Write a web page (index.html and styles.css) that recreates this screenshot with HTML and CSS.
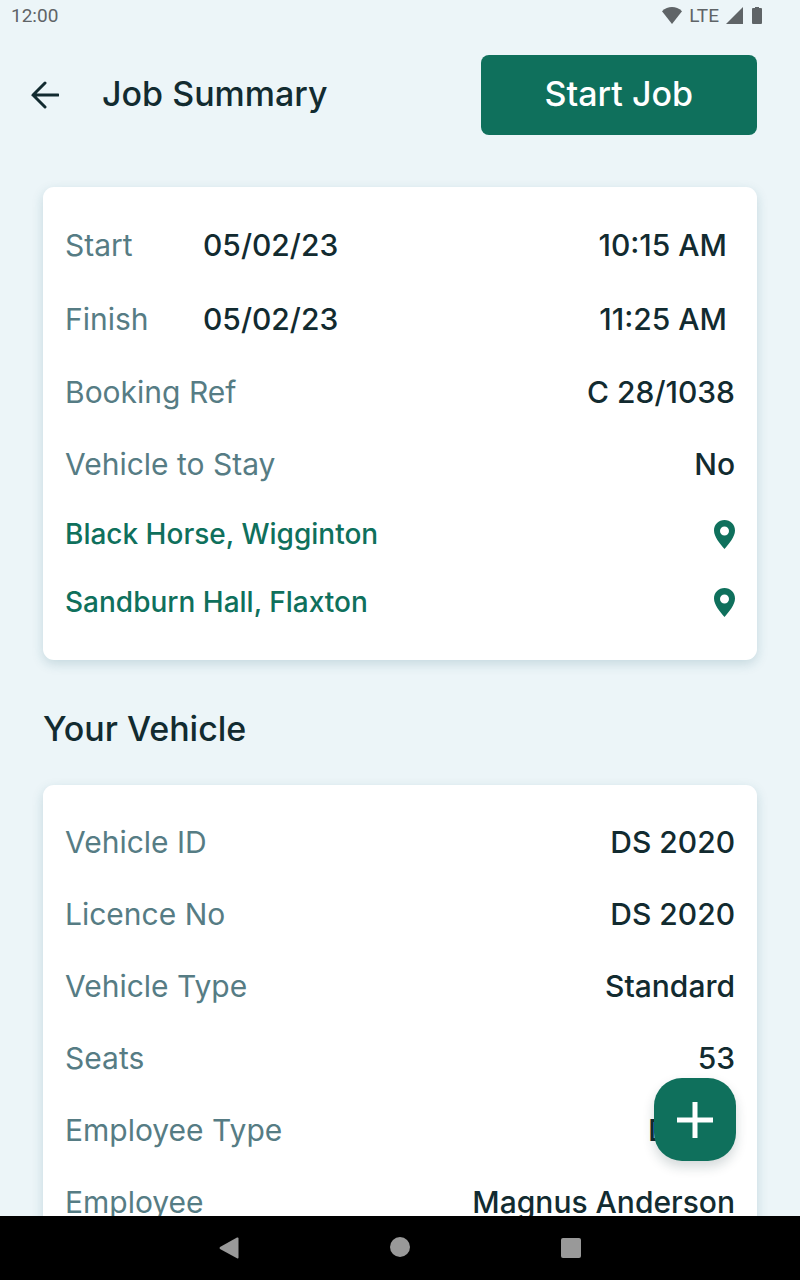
FILE: index.html
```html
<!DOCTYPE html>
<html lang="en">
<head>
  <meta charset="UTF-8" />
  <meta name="viewport" content="width=device-width, initial-scale=1.0"/>
  <title>Job Summary</title>
  <link rel="stylesheet" href="styles.css">
</head>
<body>
  <div class="status-bar">
    <span class="clock">12:00</span>
    <div class="status-icons">
      <svg width="20" height="17" viewBox="0 0 20 17"><path d="M0 4.2C6 -1.4 14 -1.4 20 4.2L10 17Z"/></svg>
      <span>LTE</span>
      <svg class="signal" width="17" height="17" viewBox="0 0 17 17"><path d="M17 0V17H0Z"/></svg>
      <svg class="battery" width="10" height="17" viewBox="0 0 10 17"><path d="M3 0H7V1H9Q10 1 10 2V16Q10 17 9 17H1Q0 17 0 16V2Q0 1 1 1H3Z"/></svg>
    </div>
  </div>

  <main class="content">
    <header class="header">
      <button class="back" aria-label="Back">
        <svg width="28" height="28" viewBox="0 0 28 28"><path d="M14 2L2 14L14 26M2 14H27"/></svg>
      </button>
      <h1>Job Summary</h1>
      <button class="start-btn">Start Job</button>
    </header>

    <section class="card">
      <div class="row time-row">
        <span class="label">Start</span>
        <span class="date">05/02/23</span>
        <span class="time">10:15 AM</span>
      </div>
      <div class="row time-row">
        <span class="label">Finish</span>
        <span class="date">05/02/23</span>
        <span class="time">11:25 AM</span>
      </div>
      <div class="row"><span class="label">Booking Ref</span><span>C 28/1038</span></div>
      <div class="row"><span class="label">Vehicle to Stay</span><span>No</span></div>
      <a class="row place" href="#">
        <span>Black Horse, Wigginton</span>
        <svg width="21" height="29" viewBox="0 0 21 29"><path fill-rule="evenodd" d="M10.500 0C4.700 0 0 4.600 0 10.500C0 17 6 23.500 10.500 29C15 23.500 21 17 21 10.500C21 4.600 16.300 0 10.500 0ZM10.500 6.500A4.500 4.500 0 1 1 10.500 15.500A4.500 4.500 0 1 1 10.500 6.500Z"/></svg>
      </a>
      <a class="row place" href="#">
        <span>Sandburn Hall, Flaxton</span>
        <svg width="21" height="29" viewBox="0 0 21 29"><path fill-rule="evenodd" d="M10.500 0C4.700 0 0 4.600 0 10.500C0 17 6 23.500 10.500 29C15 23.500 21 17 21 10.500C21 4.600 16.300 0 10.500 0ZM10.500 6.500A4.500 4.500 0 1 1 10.500 15.500A4.500 4.500 0 1 1 10.500 6.500Z"/></svg>
      </a>
    </section>

    <h2>Your Vehicle</h2>

    <section class="card">
      <div class="row"><span class="label">Vehicle ID</span><span>DS 2020</span></div>
      <div class="row"><span class="label">Licence No</span><span>DS 2020</span></div>
      <div class="row"><span class="label">Vehicle Type</span><span>Standard</span></div>
      <div class="row"><span class="label">Seats</span><span>53</span></div>
      <div class="row"><span class="label">Employee Type</span><span>Driver</span></div>
      <div class="row"><span class="label">Employee</span><span>Magnus Anderson</span></div>
    </section>
  </main>

  <button class="fab" aria-label="Add">
    <svg width="36" height="36" viewBox="0 0 36 36"><path d="M18 0V36M0 18H36"/></svg>
  </button>

  <nav class="nav-bar">
    <button aria-label="Back"><svg width="20" height="22" viewBox="0 0 20 22"><path d="M18 0.500Q19.500 0 19.500 1.500V20.500Q19.500 22 18 21.300L1 12Q0 11 1 10Z"/></svg></button>
    <button aria-label="Home"><svg width="20" height="22" viewBox="0 0 20 22"><circle cx="10" cy="10" r="10"/></svg></button>
    <button aria-label="Recent apps"><svg width="20" height="22" viewBox="0 0 20 22"><rect y="1" width="20" height="20" rx="2"/></svg></button>
  </nav>
</body>
</html>
```
FILE: styles.css
```css
* {
  box-sizing: border-box;
}

body {
  display: flex;
  flex-direction: column;
  position: relative;
  height: 100vh;
  margin: 0;
  overflow: hidden;
  background: #ecf5f8;
  color: #122b30;
  font-family: Inter, sans-serif;
}

button {
  padding: 0;
  border: none;
  background: none;
  font-family: inherit;
  cursor: pointer;
}

svg {
  display: block;
}

.status-bar {
  display: flex;
  flex: none;
  justify-content: space-between;
  align-items: center;
  height: 32px;
  padding: 0 38px 2px 11px;
  color: #5f6467;
  font-family: Roboto, sans-serif;
  font-size: 19px;
}

.status-icons {
  display: flex;
  align-items: center;
  gap: 7px;
  fill: #5f6467;
}

.battery {
  margin-left: 2px;
}

.content {
  flex: 1;
  min-height: 0;
  padding: 23px 43px 0;
  overflow-y: auto;
  scrollbar-width: none;
}

.header {
  display: flex;
  align-items: center;
  height: 80px;
  margin-bottom: 52px;
}

.back {
  margin: 0 43px 0 -12px;
}

.back svg {
  fill: none;
  stroke: #122b30;
  stroke-width: 3;
  stroke-linecap: round;
}

h1,
h2 {
  margin: 0;
  font-size: 34px;
  font-weight: 500;
  line-height: 40px;
}

h1 {
  padding-bottom: 3px;
}

h2 {
  margin: 49px 0 36px;
}

.start-btn {
  height: 80px;
  margin-left: auto;
  padding: 0 64px 3px;
  border-radius: 8px;
  background: #0f705c;
  color: #fff;
  font-size: 34px;
  font-weight: 500;
}

.card {
  padding: 21px 22px 24px;
  border-radius: 11px;
  background: #fff;
  box-shadow: 0 4px 12px rgba(20, 90, 110, 0.18);
}

.row {
  display: flex;
  justify-content: space-between;
  align-items: center;
  height: 72px;
  font-size: 30px;
  font-weight: 500;
}

.label {
  color: #567c84;
  font-weight: 400;
}

.time-row {
  height: 74px;
  padding-right: 8px;
}

.time-row .label {
  width: 138px;
}

.time-row .time {
  margin-left: auto;
}

.place {
  height: 68px;
  color: #0f705c;
  font-size: 28px;
  text-decoration: none;
  fill: #0f705c;
}

.fab {
  display: flex;
  justify-content: center;
  align-items: center;
  position: absolute;
  right: 64px;
  bottom: 119px;
  width: 82px;
  height: 83px;
  border-radius: 28px;
  background: #0f705c;
  box-shadow: 0 6px 12px rgba(18, 43, 48, 0.18);
}

.fab svg {
  stroke: #fff;
  stroke-width: 5;
}

.nav-bar {
  display: flex;
  flex: none;
  justify-content: center;
  align-items: center;
  gap: 151px;
  height: 64px;
  background: #000;
  fill: #999;
}
```
